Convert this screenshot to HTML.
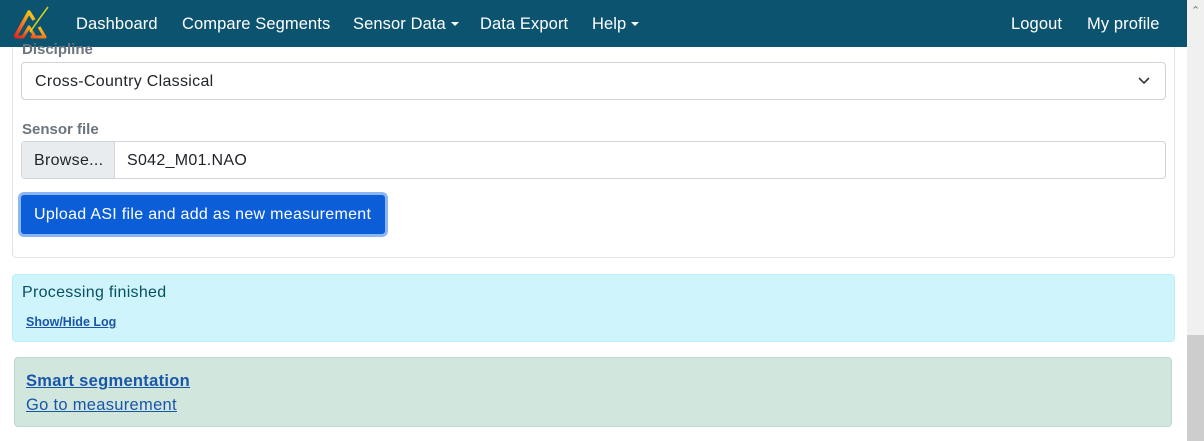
<!DOCTYPE html>
<html><head><style>
*{box-sizing:border-box;margin:0;padding:0}
body{width:1204px;height:441px;overflow:hidden;background:#fff;font-family:"Liberation Sans",sans-serif;font-size:16px;color:#212529;position:relative}
.a{position:absolute;white-space:nowrap}
.nav{left:0;top:0;width:1187px;height:47px;background:#0c5370}
.nl{color:#fff;font-size:16.5px;top:15px;letter-spacing:.1px}
.sb{left:1187px;top:0;width:17px;height:441px;background:#f0f0f0}
.caret{display:inline-block;border-left:4px solid transparent;border-right:4px solid transparent;border-top:4px solid #fff;vertical-align:3px;margin-left:5px}
.inp{border:1px solid #ced4da;border-radius:4px;background:#fff}
.t{letter-spacing:.3px}
a{color:#1a56a8;text-decoration:underline}
</style></head><body>
<div class="a nav"></div>
<svg class="a" style="left:12px;top:5px" width="38" height="36" viewBox="0 0 38 36">
<defs><linearGradient id="g" x1="0" y1="1" x2="1" y2="0"><stop offset="0" stop-color="#e8231e"/><stop offset=".6" stop-color="#f7941d"/><stop offset="1" stop-color="#f5d21a"/></linearGradient></defs>
<path d="M3 32 L17 7 L22 15" fill="none" stroke="url(#g)" stroke-width="3.5" stroke-linejoin="round"/>
<path d="M3 32 L11 32 L17 22 L22 30 L20 32 L33 32 L27 22" fill="none" stroke="url(#g)" stroke-width="3" stroke-linejoin="round"/>
<path d="M18 27 Q27 14 36 2" fill="none" stroke="#d6d318" stroke-width="1.5"/>
</svg>
<div class="a nl" style="left:76px">Dashboard</div>
<div class="a nl" style="left:182px">Compare Segments</div>
<div class="a nl" style="left:353px">Sensor Data<span class="caret"></span></div>
<div class="a nl" style="left:480px">Data Export</div>
<div class="a nl" style="left:592px">Help<span class="caret"></span></div>
<div class="a nl" style="left:1011px">Logout</div>
<div class="a nl" style="left:1087px">My profile</div>
<div class="a sb"></div>
<div class="a" style="left:1187px;top:335px;width:17px;height:106px;background:#cdcdcd"></div>
<div class="a" style="left:1191px;top:4px;color:#777;font-size:11px">&#8963;</div>

<div class="a" style="left:12px;top:47px;width:1163px;height:211px;border:1px solid #e3e3e3;border-top:none;border-radius:0 0 4px 4px"></div>
<div class="a" style="left:22px;top:41px;color:#6c757d;font-weight:bold;font-size:15px">Discipline</div>
<div class="a inp" style="left:21px;top:62px;width:1145px;height:38px"></div>
<div class="a t" style="left:35px;top:73px">Cross-Country Classical</div>
<svg class="a" style="left:1138px;top:76px" width="12" height="10"><path d="M1 2 L6 7 L11 2" fill="none" stroke="#343a40" stroke-width="1.6"/></svg>
<div class="a" style="left:22px;top:121px;color:#6c757d;font-weight:bold;font-size:15px">Sensor file</div>
<div class="a inp" style="left:21px;top:141px;width:1145px;height:38px"></div>
<div class="a" style="left:22px;top:142px;width:93px;height:36px;background:#e9ecef;border-right:1px solid #ced4da;border-radius:4px 0 0 4px"></div>
<div class="a t" style="left:34px;top:152px">Browse...</div>
<div class="a t" style="left:127px;top:152px">S042_M01.NAO</div>
<div class="a" style="left:18px;top:192px;width:370px;height:45px;border:3px solid #8bb6f5;border-radius:6px;background:#0b5ed7"></div>
<div class="a t" style="left:34px;top:206px;color:#fff">Upload ASI file and add as new measurement</div>

<div class="a" style="left:12px;top:274px;width:1163px;height:68px;background:#cff4fc;border:1px solid #b6effb;border-radius:4px"></div>
<div class="a t" style="left:22px;top:284px;color:#055160">Processing finished</div>
<div class="a" style="left:26px;top:315px;font-size:12.5px;font-weight:bold"><a>Show/Hide Log</a></div>

<div class="a" style="left:14px;top:357px;width:1158px;height:70px;background:#d1e7dd;border:1px solid #badbcc;border-radius:4px"></div>
<div class="a t" style="left:26px;top:372px;font-weight:bold;font-size:16.5px"><a>Smart segmentation</a></div>
<div class="a t" style="left:26px;top:396px;font-size:16.5px"><a>Go to measurement</a></div>
</body></html>
